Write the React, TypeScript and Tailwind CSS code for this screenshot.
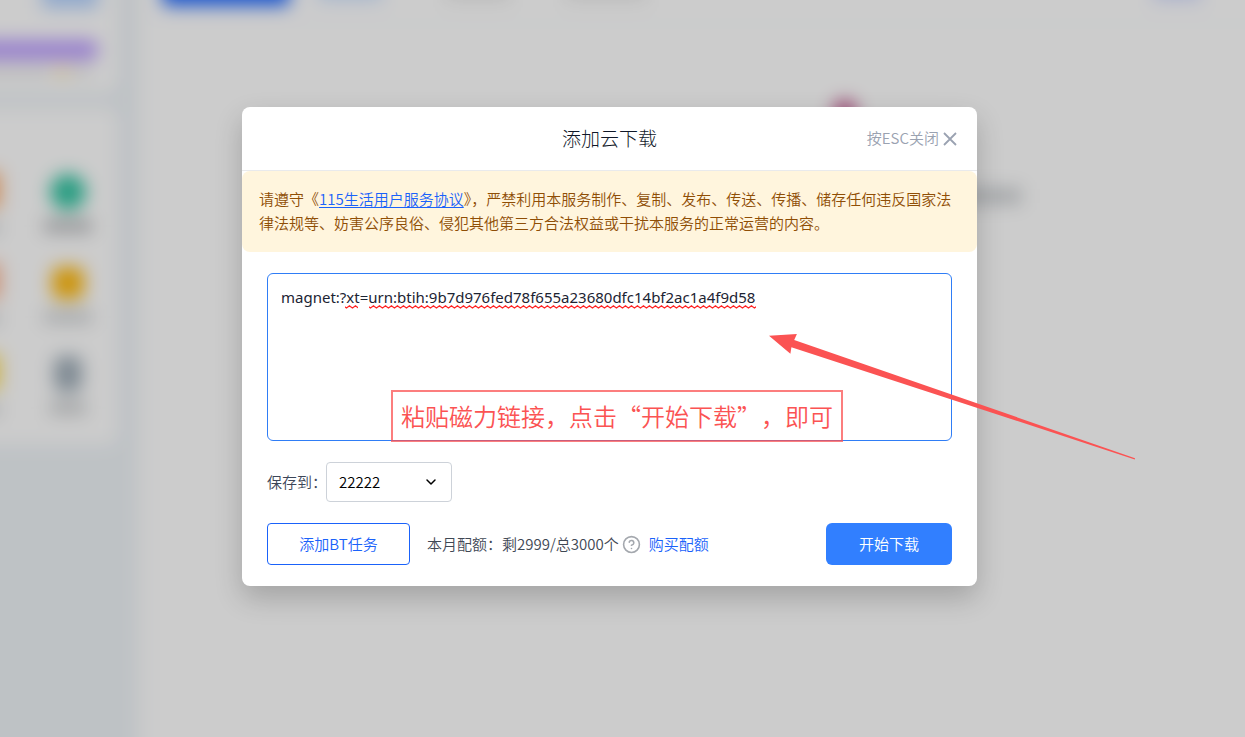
import React, { useState } from "react";
import { ChevronDown, CircleHelp } from "lucide-react";

const shortcuts = [
  { left: "bg-[#ffb070]", right: "size-9 rounded-full bg-[#35c5a3]", label: "w-12 bg-[#b4b7ba]" },
  { left: "bg-[#ffb590]", right: "size-8 rounded-lg bg-[#ffba10]", label: "w-12 bg-[#cfd2d4]" },
  { left: "bg-[#ffe05a]", right: "h-9 w-7 rounded-lg bg-[#a0aeb9]", label: "w-9 bg-[#c8cbcd]" },
];

function PageBehind() {
  return (
    <div aria-hidden="true" className="absolute -inset-6 flex bg-[#eef3f7] blur-[9px]">
      <aside className="flex w-[142px] flex-col gap-4 overflow-hidden">
        <div className="flex h-[116px] flex-col items-end rounded-br-xl bg-white pr-5">
          <div className="h-8 w-14 bg-[#b6d4ff]" />
          <div className="mt-8 h-5 w-full rounded-r-lg bg-[#bd9fff]" />
          <div className="mt-2 flex gap-1 pr-2">
            <div className="h-2 w-20 bg-[#e4e4e6]" />
            <div className="h-2 w-4 bg-[#fbe0a8]" />
            <div className="h-2 w-4 bg-[#e2e2e2]" />
          </div>
        </div>
        <div className="flex h-[337px] flex-col rounded-r-xl bg-white pt-[64px]">
          {shortcuts.map((item, i) => (
            <div key={i} className="flex h-[94px] justify-between pr-[22px]">
              <div className="flex w-6 flex-col gap-4">
                <div className={"h-9 w-6 " + item.left} />
                <div className="h-2 w-6 bg-[#c5c8ca]" />
              </div>
              <div className="flex w-14 flex-col items-center gap-2">
                <div className="flex h-10 items-center">
                  <div className={item.right} />
                </div>
                <div className={"h-3 " + item.label} />
              </div>
            </div>
          ))}
        </div>
      </aside>
      <main className="ml-5 flex-1 bg-white">
        <div className="flex h-12 items-start border-b border-[#f2f4f5] pl-6 pr-[68px]">
          <div className="h-[30px] w-32 rounded-b-md bg-[#256dff]" />
          <div className="ml-7 h-6 w-16 bg-[#cfe3ff]" />
          <div className="ml-16 h-6 w-16 bg-[#e9e9e9]" />
          <div className="ml-14 h-6 w-20 bg-[#e9e9e9]" />
          <div className="ml-auto h-6 w-12 bg-[#d4dcff]" />
        </div>
        <div className="ml-[531px] flex w-[352px] flex-col items-center pt-[76px]">
          <div className="size-6 rounded-full bg-[#c0508c]" />
          <div className="mt-16 h-4 w-full bg-[#cdd0d3]" />
        </div>
      </main>
    </div>
  );
}

function Squiggle({ id, className }: { id: string; className: string }) {
  return (
    <svg aria-hidden="true" className={"pointer-events-none absolute top-8 h-1 " + className}>
      <defs>
        <pattern id={id} width="6" height="4" patternUnits="userSpaceOnUse">
          <path d="M-1.5 0.8 L1.5 3 L4.5 0.8 L7.5 3" fill="none" stroke="#ff2222" strokeWidth="1.2" />
        </pattern>
      </defs>
      <rect width="100%" height="4" fill={"url(#" + id + ")"} />
    </svg>
  );
}

function Annotation() {
  return (
    <>
      <div className="pointer-events-none absolute -bottom-px left-[124px] flex h-[52px] items-center whitespace-nowrap border-2 border-[#fb5353]/75 px-2 text-2xl text-[#fb5353] [text-spacing-trim:space-all]">
        粘贴磁力链接，点击“开始下载”，即可
      </div>
      <svg
        aria-hidden="true"
        width="368"
        height="128"
        viewBox="0 0 368 128"
        className="pointer-events-none absolute left-[501px] top-[60px] max-w-none"
      >
        <path
          d="M1 2.7 L28.9 1 L26.2 7 L367 125.2 L366.8 126.4 L23.4 14.3 L22.4 20.7 Z"
          fill="#fb5353"
        />
      </svg>
    </>
  );
}

export default function App() {
  const [link, setLink] = useState("magnet:?xt=urn:btih:9b7d976fed78f655a23680dfc14bf2ac1a4f9d58");
  return (
    <div className="relative min-h-screen overflow-hidden bg-white font-['Noto_Sans_CJK_SC',sans-serif] font-[350]">
      <PageBehind />
      <div className="absolute inset-0 flex items-start justify-center bg-black/20 pr-[26px] pt-[107px]">
        <section
          role="dialog"
          aria-labelledby="dialog-title"
          className="w-full max-w-[735px] rounded-lg bg-white text-[15px] shadow-[0_12px_28px_rgba(0,0,0,0.2)]"
        >
          <header className="grid h-16 grid-cols-[1fr_auto_1fr] items-center border-b border-[#e9eaec] px-5">
            <h2 id="dialog-title" className="col-start-2 text-[19px] font-light text-[#101828]">
              添加云下载
            </h2>
            <button type="button" className="flex items-center gap-1 justify-self-end text-[#9aa2b1]">
              按ESC关闭
              <svg aria-hidden="true" width="14" height="14" viewBox="0 0 14 14" fill="none">
                <path d="M1 1 L13 13 M13 1 L1 13" stroke="currentColor" strokeWidth="1.8" />
              </svg>
            </button>
          </header>

          <p className="rounded-lg bg-[#fff5dd] px-[17px] pb-[17px] pt-4 leading-6 text-[#8f4e05]">
            请遵守《
            <a href="#agreement" className="text-[#1a62fa] underline underline-offset-2">
              115生活用户服务协议
            </a>
            》，严禁利用本服务制作、复制、发布、传送、传播、储存任何违反国家法律法规等、妨害公序良俗、侵犯其他第三方合法权益或干扰本服务的正常运营的内容。
          </p>

          <form className="flex flex-col gap-[21px] px-[25px] py-[21px]" onSubmit={(e) => e.preventDefault()}>
            <div className="relative">
              <textarea
                aria-label="下载链接"
                spellCheck={false}
                value={link}
                onChange={(e) => setLink(e.target.value)}
                className="block h-[168px] w-full resize-none rounded-md border border-[#2f7df6] px-[13px] py-[11px] font-['Noto_Sans',sans-serif] text-[15px] font-normal leading-6 text-[#1c2433] outline-none"
              />
              <Squiggle id="squiggle-a" className="left-[78px] w-[13px]" />
              <Squiggle id="squiggle-b" className="left-[102px] w-[387px]" />
              <Annotation />
            </div>

            <div className="flex items-center gap-2">
              <label htmlFor="folder" className="w-[51px] whitespace-nowrap text-[#3c4658]">
                保存到：
              </label>
              <div className="relative">
                <select
                  id="folder"
                  className="block h-10 w-[126px] appearance-none rounded border border-[#cdd2d9] bg-white px-3 text-black"
                >
                  <option>22222</option>
                </select>
                <ChevronDown size={16} strokeWidth={2.25} className="pointer-events-none absolute right-[13px] top-3" />
              </div>
            </div>

            <div className="flex items-center">
              <button type="button" className="h-[42px] w-[143px] rounded border border-[#1a62fa] text-[#1a62fa]">
                添加BT任务
              </button>
              <span className="ml-[17px] text-[#3f4854]">本月配额：剩2999/总3000个</span>
              <CircleHelp size={19} strokeWidth={2} className="ml-[3px] text-[#a4a8ae]" />
              <a href="#quota" className="ml-2 text-[#1a62fa]">
                购买配额
              </a>
              <button type="submit" className="ml-auto h-[42px] w-[126px] rounded-md bg-[#317fff] text-white">
                开始下载
              </button>
            </div>
          </form>
        </section>
      </div>
    </div>
  );
}
